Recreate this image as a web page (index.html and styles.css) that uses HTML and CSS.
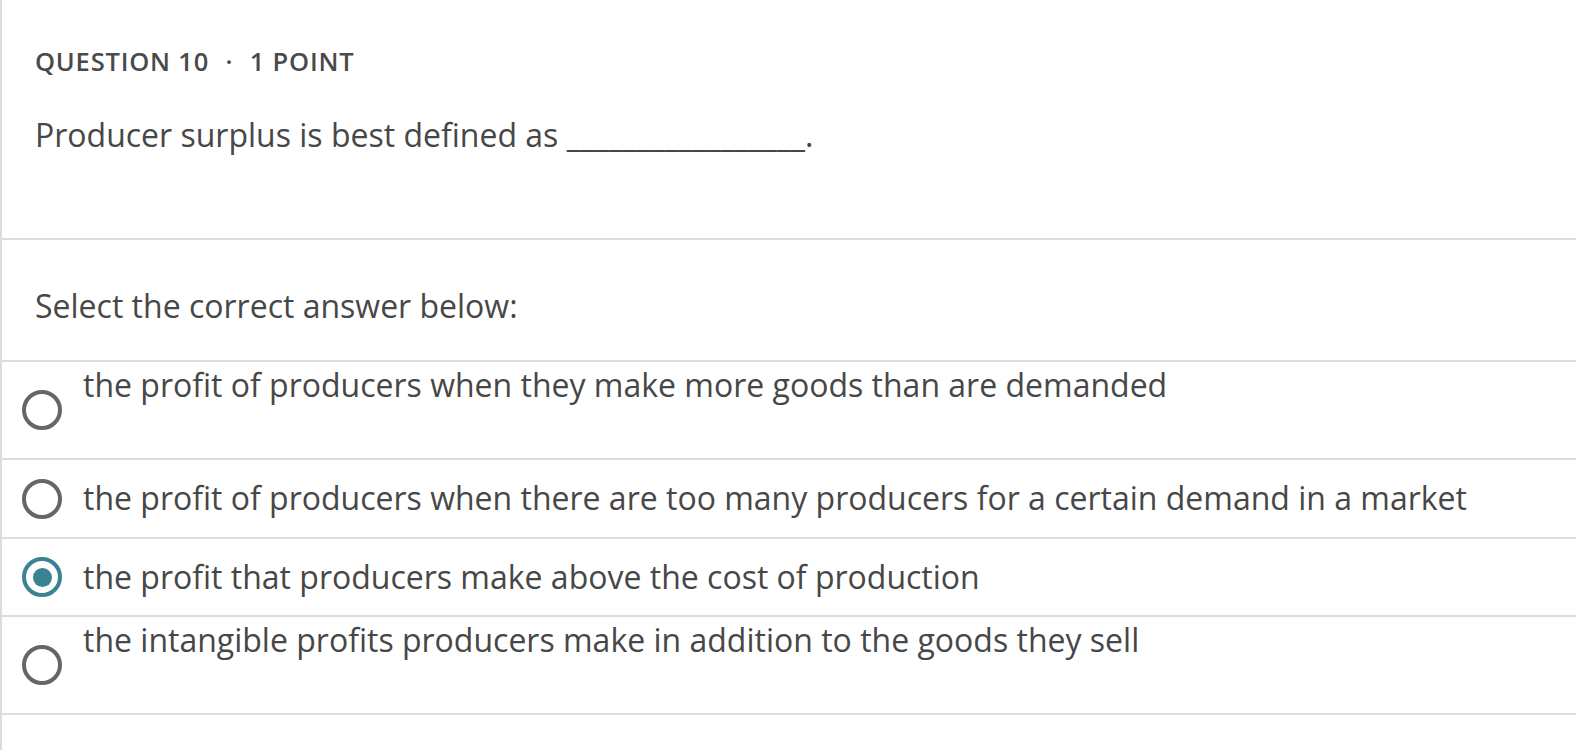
FILE: index.html
```html
<!DOCTYPE html>
<html>
<head>
<meta charset="utf-8">
<link rel="stylesheet" href="styles.css">
</head>
<body>
<div class="page">
  <section class="question">
    <div class="meta">QUESTION 10 <span class="dot">·</span> 1 POINT</div>
    <p class="prompt">Producer surplus is best defined as <span class="blank">_________________</span>.</p>
  </section>
  <section class="instruction">
    <p>Select the correct answer below:</p>
  </section>
  <ul class="options">
    <li class="option tall">
      <span class="radio"></span>
      <span class="label">the profit of producers when they make more goods than are demanded</span>
    </li>
    <li class="option">
      <span class="radio"></span>
      <span class="label">the profit of producers when there are too many producers for a certain demand in a market</span>
    </li>
    <li class="option short">
      <span class="radio checked"></span>
      <span class="label">the profit that producers make above the cost of production</span>
    </li>
    <li class="option tall">
      <span class="radio"></span>
      <span class="label">the intangible profits producers make in addition to the goods they sell</span>
    </li>
  </ul>
</div>
</body>
</html>
```
FILE: styles.css
```css
html, body {
  margin: 0;
  padding: 0;
  background: #fff;
}
body {
  font-family: "Open Sans", "Noto Sans", sans-serif;
  color: #474747;
}
.page {
  border-left: 2px solid #dcdcdc;
  min-height: 750px;
  box-sizing: border-box;
}
.question {
  padding: 44px 0 81px 33px;
  border-bottom: 2px solid #dcdcdc;
}
.meta {
  font-size: 25.5px;
  font-weight: 600;
  letter-spacing: 0.8px;
  line-height: 35px;
  color: #4a4a4a;
}
.dot {
  margin: 0 9px;
}
.prompt {
  margin: 34px 0 0 0;
  font-size: 32px;
  line-height: 44px;
}
.instruction {
  padding: 44px 0 32px 33px;
  border-bottom: 2px solid #dcdcdc;
}
.instruction p {
  margin: 0;
  font-size: 32px;
  line-height: 44px;
}
.options {
  list-style: none;
  margin: 0;
  padding: 0;
}
.option {
  display: flex;
  align-items: center;
  border-bottom: 2px solid #dcdcdc;
  padding: 0 0 0 20px;
}
.label {
  font-size: 32px;
  line-height: 44px;
  padding: 16px 0 17px 21px;
}
.option.short .label {
  padding: 16px 0 16px 21px;
}
.option.tall .label {
  padding: 1px 0 51px 21px;
}
.radio {
  flex: none;
  width: 40px;
  height: 40px;
  box-sizing: border-box;
  border: 4px solid #666;
  border-radius: 50%;
  display: flex;
  align-items: center;
  justify-content: center;
}
.radio.checked {
  border-color: #3a8391;
}
.radio.checked::after {
  content: "";
  width: 19px;
  height: 19px;
  border-radius: 50%;
  background: #3a8391;
}
```
